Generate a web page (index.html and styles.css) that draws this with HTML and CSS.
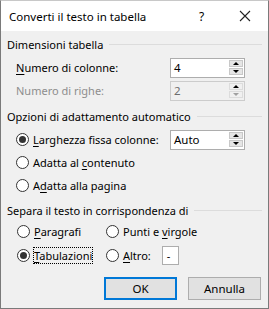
FILE: index.html
```html
<!DOCTYPE html>
<html lang="it">
<head>
    <meta charset="UTF-8">
    <title>Converti il testo in tabella</title>
    <link rel="stylesheet" href="styles.css">
</head>
<body>
    <div class="dialog">
        <!-- Title bar -->
        <div class="title-bar">
            <span class="title">Converti il testo in tabella</span>
            <span class="help">?</span>
            <svg class="close" width="12" height="12" viewBox="0 0 12 12" aria-hidden="true">
                <path d="M1 1L11 11M11 1L1 11" stroke="#222" stroke-width="1.1" fill="none"></path>
            </svg>
        </div>

        <div class="content">
            <!-- Table size -->
            <div class="group-head"><span>Dimensioni tabella</span><span class="rule"></span></div>
            <div class="row first">
                <span class="label"><u>N</u>umero di colonne:</span>
                <div class="spin">
                    <span class="spin-value">4</span>
                    <span class="spin-buttons">
                        <span class="spin-btn"><span class="arrow-up"></span></span>
                        <span class="spin-btn"><span class="arrow-down"></span></span>
                    </span>
                </div>
            </div>
            <div class="row">
                <span class="label disabled">Numero di righe:</span>
                <div class="spin spin-disabled">
                    <span class="spin-value">2</span>
                    <span class="spin-buttons">
                        <span class="spin-btn"><span class="arrow-up"></span></span>
                        <span class="spin-btn"><span class="arrow-down"></span></span>
                    </span>
                </div>
            </div>

            <!-- Autofit -->
            <div class="group-head spaced"><span>Opzioni di adattamento automatico</span><span class="rule"></span></div>
            <div class="row first">
                <span class="radio-label"><span class="radio checked"></span><span><u>L</u>arghezza fissa colonne:</span></span>
                <div class="spin">
                    <span class="spin-value">Auto</span>
                    <span class="spin-buttons">
                        <span class="spin-btn"><span class="arrow-up"></span></span>
                        <span class="spin-btn"><span class="arrow-down"></span></span>
                    </span>
                </div>
            </div>
            <div class="row">
                <span class="radio-label"><span class="radio"></span><span>Adatta al <u>c</u>ontenuto</span></span>
            </div>
            <div class="row">
                <span class="radio-label"><span class="radio"></span><span>A<u>d</u>atta alla pagina</span></span>
            </div>

            <!-- Separator -->
            <div class="group-head sep-head"><span>Separa il testo in corrispondenza di</span><span class="rule"></span></div>
            <div class="sep-grid">
                <span class="radio-label"><span class="radio"></span><span><u>P</u>aragrafi</span></span>
                <span class="radio-label"><span class="radio"></span><span>Punti e <u>v</u>irgole</span></span>
                <span class="radio-label"><span class="radio checked"></span><span class="focused"><u>T</u>abulazioni</span></span>
                <span class="radio-label"><span class="radio"></span><span><u>A</u>ltro:</span><span class="other-box">-</span></span>
            </div>

            <!-- Buttons -->
            <div class="buttons">
                <span class="button default">OK</span>
                <span class="button">Annulla</span>
            </div>
        </div>
    </div>
</body>
</html>
```

FILE: styles.css
```css
/* General */
body {
    margin: 0;
    font-family: "Noto Sans", Arial, sans-serif;
    font-size: 11px;
    color: #000;
}

u {
    text-decoration: underline;
    text-underline-offset: 2px;
}

/* Window */
.dialog {
    width: 269px;
    height: 309px;
    box-sizing: border-box;
    border: 1px solid #7a7a7a;
    border-top-color: #c8c8c8;
    background-color: #f0f0f0;
    display: flex;
    flex-direction: column;
    white-space: nowrap;
}

.title-bar {
    height: 30px;
    background-color: #ffffff;
    display: flex;
    align-items: center;
    padding-left: 8px;
    flex-shrink: 0;
}

.title {
    flex: 1;
    font-size: 11.5px;
}

.help {
    width: 12px;
    margin-right: 28px;
    font-size: 12px;
}

.close {
    margin-right: 17px;
}

/* Content */
.content {
    padding: 2px 6px 0 6px;
    display: flex;
    flex-direction: column;
}

.group-head {
    display: flex;
    align-items: center;
    height: 22px;
    gap: 6px;
}

.group-head.spaced {
    margin-top: 3px;
}

.rule {
    flex: 1;
    height: 1px;
    background-color: #dcdcdc;
}

.row {
    display: flex;
    align-items: center;
    justify-content: space-between;
    height: 23px;
    padding-left: 9px;
    padding-right: 17px;
}

.row.first {
    margin-top: 1px;
}

.label.disabled {
    color: #8d8d8d;
}

/* Spin box */
.spin {
    width: 75px;
    height: 20px;
    box-sizing: border-box;
    border: 1px solid #adadad;
    background-color: #ffffff;
    display: flex;
    align-items: center;
}

.spin-value {
    flex: 1;
    padding-left: 3px;
    font-size: 11.5px;
}

.spin-disabled {
    background-color: #f0f0f0;
    border-color: #cccccc;
}

.spin-disabled .spin-value {
    color: #6d6d6d;
}

.spin-buttons {
    width: 14px;
    height: 15px;
    margin-right: 1px;
    display: flex;
    flex-direction: column;
    gap: 1px;
}

.spin-btn {
    flex: 1;
    background-color: #e5e5e5;
    border: 1px solid #c8c8c8;
    display: flex;
    align-items: center;
    justify-content: center;
}

.arrow-up {
    width: 0;
    height: 0;
    border-left: 3px solid transparent;
    border-right: 3px solid transparent;
    border-bottom: 3px solid #000;
}

.arrow-down {
    width: 0;
    height: 0;
    border-left: 3px solid transparent;
    border-right: 3px solid transparent;
    border-top: 3px solid #000;
}

.spin-disabled .spin-btn {
    background-color: #f0f0f0;
    border-color: #dcdcdc;
}

.spin-disabled .spin-btn + .spin-btn .arrow-down {
    border-top-color: #a0a0a0;
}

/* Radios */
.radio-label {
    display: flex;
    align-items: center;
    gap: 4px;
}

.radio {
    width: 13px;
    height: 13px;
    box-sizing: border-box;
    border: 1px solid #333333;
    border-radius: 50%;
    background-color: #ffffff;
    display: flex;
    align-items: center;
    justify-content: center;
}

.radio.checked::after {
    content: "";
    width: 7px;
    height: 7px;
    border-radius: 50%;
    background-color: #333333;
}

.group-head.sep-head {
    margin-top: 5px;
    height: 17px;
}

.sep-grid {
    display: grid;
    grid-template-columns: 89px 1fr;
    grid-auto-rows: 24px;
    align-items: center;
    padding-left: 10px;
}

.focused {
    outline: 1px dotted #000;
    outline-offset: 0;
}

.other-box {
    width: 17px;
    height: 19px;
    box-sizing: border-box;
    margin-left: 7px;
    border: 1px solid #adadad;
    background-color: #ffffff;
    padding-left: 4px;
    line-height: 17px;
}

/* Buttons */
.buttons {
    display: flex;
    justify-content: flex-end;
    gap: 11px;
    padding-right: 1px;
    margin-top: 10px;
}

.button {
    width: 73px;
    height: 23px;
    box-sizing: border-box;
    border: 1px solid #adadad;
    background-color: #e1e1e1;
    display: flex;
    align-items: center;
    justify-content: center;
    font-size: 11.5px;
}

.button.default {
    border: 2px solid #0078d7;
}
```
